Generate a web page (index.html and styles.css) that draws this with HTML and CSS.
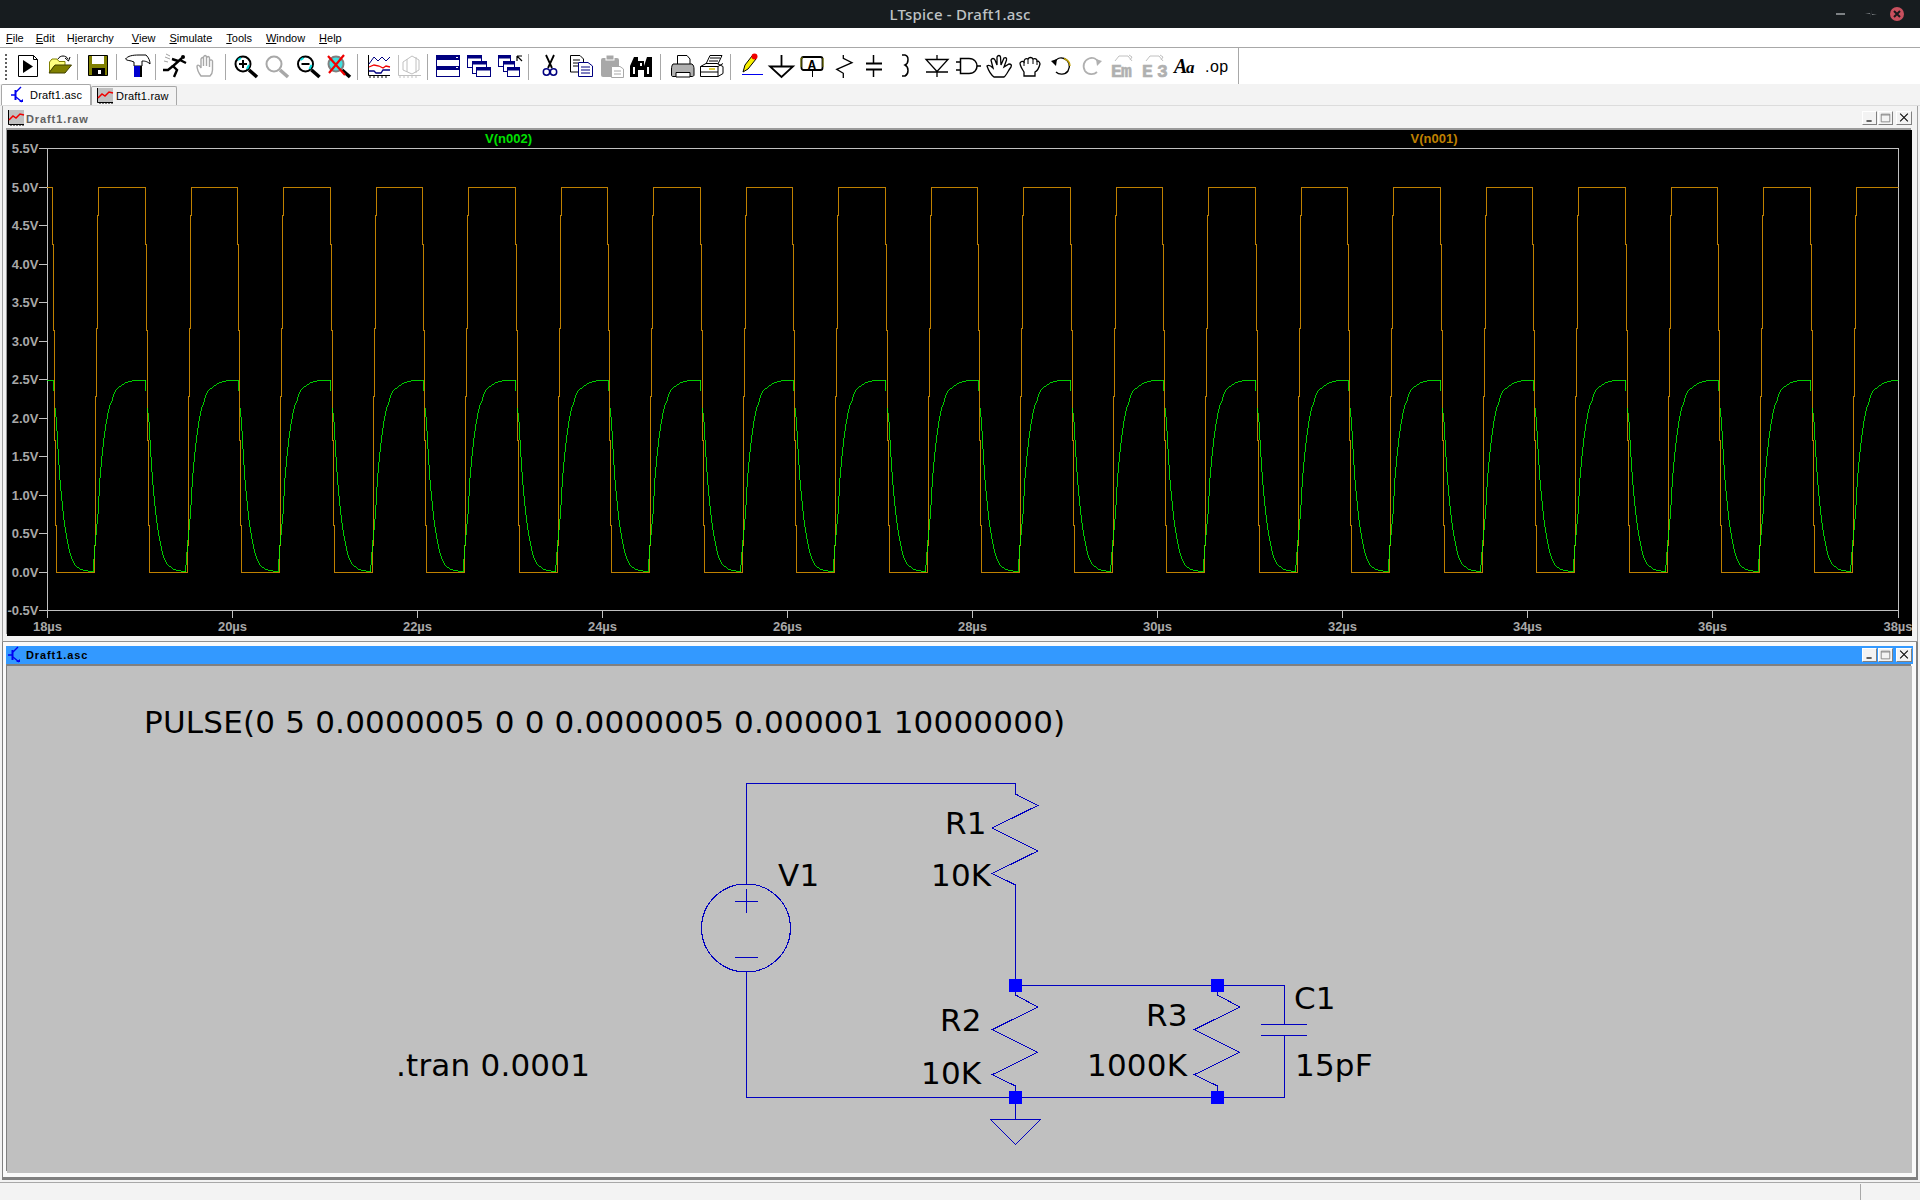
FILE: index.html
```html
<!DOCTYPE html>
<html lang="en">
<head>
<meta charset="utf-8">
<title>LTspice - Draft1.asc</title>
<link rel="stylesheet" href="styles.css">
</head>
<body>
<div class="app">
  <header class="titlebar">
    <span></span>
    <span class="title-text">LTspice - Draft1.asc</span>
    <div class="wm-controls">
      <span class="wm-min"></span>
      <svg class="wm-restore" viewBox="0 0 14 14"><path d="M7 2L8 7H13L8 8L7 2ZM7 12L6 7H1L6 6Z" fill="#7d8184"/></svg>
      <svg class="wm-close" viewBox="0 0 16 16"><circle cx="8" cy="8" r="7" fill="#c8505e"/><path d="M5 5L11 11M11 5L5 11" stroke="#17191c" stroke-width="2"/></svg>
    </div>
  </header>
  <nav class="menubar">
    <span class="menu"><u>F</u>ile</span>
    <span class="menu menu-tight"><u>E</u>dit</span>
    <span class="menu menu-tight">H<u>i</u>erarchy</span>
    <span class="menu menu-wide"><u>V</u>iew</span>
    <span class="menu"><u>S</u>imulate</span>
    <span class="menu"><u>T</u>ools</span>
    <span class="menu"><u>W</u>indow</span>
    <span class="menu"><u>H</u>elp</span>
  </nav>
  <div class="toolbar">
    <span class="grip"></span>
    <svg class="ic" viewBox="0 0 31 36"><path d="M7.500 7.500H22.500L26.500 11.500V28.500H7.500Z" fill="#fff" stroke="#000"/><path d="M22.500 7.500V11.500H26.500" fill="none" stroke="#000"/><path d="M12 12L22 18.500L12 25Z" fill="#000"/></svg>
    <svg class="ic" viewBox="0 0 31 36"><path d="M7.500 24V14L10 11H15L17 13.500H23V18H12L7.500 24Z" fill="#ffff80" stroke="#808000"/><path d="M7 25L13 17H29.500L23 25Z" fill="#808000" stroke="#404000"/><path d="M16 11C18 7 24 7 26 11" fill="none" stroke="#000"/><path d="M23 10L26.500 13L28 9" fill="none" stroke="#000"/></svg>
    <span class="sep"></span>
    <svg class="ic" viewBox="0 0 31 36"><path d="M7.500 7.500H26.500V27.500H7.500Z" fill="#808000" stroke="#000"/><rect x="11" y="8" width="12" height="8" fill="#fff"/><rect x="11" y="20" width="13" height="7" fill="#000"/><rect x="17" y="22" width="3" height="4" fill="#fff"/></svg>
    <span class="sep"></span>
    <svg class="ic" viewBox="0 0 31 36"><path d="M5.500 11C8 8 12 7 19 7H26C29 10 30 13 30 16C27 13 24 13 22 13V18H14V14C10 12 7 13 5.500 11Z" fill="#fff" stroke="#000"/><rect x="14" y="18" width="6" height="11" fill="#0000d0"/><rect x="20" y="18" width="2" height="11" fill="#000"/></svg>
    <span class="sep"></span>
    <svg class="ic" viewBox="0 0 31 36"><g fill="none" stroke="#000" stroke-width="2.400"><path d="M23 10L14 18L18 22L15 29"/><path d="M14 18L9 22H4"/><path d="M21 12L27 15M19 13L13 11"/></g><circle cx="24" cy="9" r="2" fill="#000"/><path d="M6 9L11 11M5 13L9 14M7 6L11 8" stroke="#a0a0a0" fill="none"/></svg>
    <svg class="ic" viewBox="0 0 31 36"><path d="M11 28C8 24 7 20 7 18C8 16 10 18 11 20V11C12 9 13 9 13.500 11V18V9C14.500 7 16 7 16.500 9V18V10C17.500 8 19 8 19.500 10V19V13C20.500 11 22 12 22.500 13V22C22.500 25 21 27 20 28Z" fill="#fff" stroke="#a8a8a8" stroke-width="1.400"/></svg>
    <span class="sep"></span>
    <svg class="ic" viewBox="0 0 31 36"><path d="M20 22L28 29" stroke="#000" stroke-width="3.600"/><circle cx="14" cy="16" r="7.500" fill="#fff" stroke="#000" stroke-width="2"/><path d="M9 12L12 10M18 21L20 17" stroke="#00e0e0" stroke-width="2"/><path d="M10 16H18M14 12V20" stroke="#000" stroke-width="2"/></svg>
    <svg class="ic" viewBox="0 0 31 36"><path d="M20 22L28 29" stroke="#a8a8a8" stroke-width="3.600"/><circle cx="14" cy="16" r="7.500" fill="#fff" stroke="#a8a8a8" stroke-width="2"/></svg>
    <svg class="ic" viewBox="0 0 31 36"><path d="M20.500 22L28.500 29" stroke="#000" stroke-width="3.600"/><circle cx="14.500" cy="16" r="7.500" fill="#fff" stroke="#000" stroke-width="2"/><path d="M9.500 12L12.500 10M18.500 21L20.500 17" stroke="#00e0e0" stroke-width="2"/><path d="M10.500 16H18.500" stroke="#000" stroke-width="2"/></svg>
    <svg class="ic" viewBox="0 0 31 36"><path d="M20 22L28 29" stroke="#000" stroke-width="3.600"/><circle cx="14" cy="16" r="7.500" fill="#40e0e0" stroke="#808080" stroke-width="2"/><path d="M6 8L23 27M22 7L7 25" stroke="#f00000" stroke-width="2.200"/></svg>
    <span class="sep"></span>
    <svg class="ic" viewBox="0 0 31 36"><path d="M7.500 7V27.500H29M9 27V30M13 27V30M17 27V30M21 27V30M25 27V30" fill="none" stroke="#000"/><path d="M8 16L13 9L17 13L21 9L25 13L29 9" fill="none" stroke="#000080"/><path d="M8 19L13 17L18 18L22 20L25 18L29 19" fill="none" stroke="#f00000" stroke-width="1.300"/><path d="M8 23H13L15 25H20L22 22H29" fill="none" stroke="#000080" stroke-width="1.300"/></svg>
    <svg class="ic" viewBox="0 0 31 36"><path d="M6.500 7V27.500H29M8 27V30M12 27V30M16 27V30M20 27V30M24 27V30M11 14L20 8L27 12V22L20 26L11 22Z M15 11V24M24 9V25" fill="none" stroke="#c0c0c0"/></svg>
    <span class="sep"></span>
    <svg class="ic" viewBox="0 0 31 36"><rect x="5.500" y="7.500" width="23" height="21" fill="#fff" stroke="#000080"/><rect x="6" y="8" width="22" height="4" fill="#000080"/><rect x="6" y="18" width="22" height="4" fill="#000080"/><path d="M25 9.500H27M25 19.500H27" stroke="#fff"/></svg>
    <svg class="ic" viewBox="0 0 31 36"><rect x="5.500" y="7.500" width="14" height="12" fill="#fff" stroke="#000080"/><rect x="5.500" y="7.500" width="14" height="3" fill="#000080"/><rect x="10.500" y="13.500" width="14" height="12" fill="#fff" stroke="#000080"/><rect x="10.500" y="13.500" width="14" height="3" fill="#000080"/><rect x="14.500" y="19.500" width="14" height="9" fill="#fff" stroke="#000080"/><rect x="14.500" y="19.500" width="14" height="3" fill="#000080"/></svg>
    <svg class="ic" viewBox="0 0 31 36"><rect x="5.500" y="7.500" width="12" height="11" fill="#fff" stroke="#000080"/><rect x="5.500" y="7.500" width="12" height="3" fill="#000080"/><rect x="10.500" y="13.500" width="11" height="10" fill="#fff" stroke="#000080"/><rect x="10.500" y="13.500" width="11" height="3" fill="#000080"/><rect x="14.500" y="19.500" width="12" height="9" fill="#fff" stroke="#000080"/><rect x="14.500" y="19.500" width="12" height="3" fill="#000080"/><path d="M24 8V13M24 8H29M24 8L29 13" fill="none" stroke="#000" stroke-width="1.200"/></svg>
    <span class="sep"></span>
    <svg class="ic" viewBox="0 0 31 36"><path d="M14 7L20 20M22 7L16 20" stroke="#000" stroke-width="1.800"/><circle cx="14.500" cy="24" r="3.200" fill="#fff" stroke="#000080" stroke-width="1.500"/><circle cx="21.500" cy="24" r="3.200" fill="#fff" stroke="#000080" stroke-width="1.500"/></svg>
    <svg class="ic" viewBox="0 0 31 36"><path d="M7.500 7.500H17L20.500 11V24H7.500Z" fill="#fff" stroke="#000"/><path d="M10 12H17M10 15H15M10 18H15" stroke="#000"/><path d="M15.500 14.500H25L29.500 18V28.500H15.500Z" fill="#fff" stroke="#000080"/><path d="M18 19H27M18 22H27M18 25H27" stroke="#000080"/></svg>
    <svg class="ic" viewBox="0 0 31 36"><rect x="7" y="10" width="18" height="19" rx="2" fill="#a8a8a8"/><rect x="12" y="7" width="8" height="5" fill="#a8a8a8" stroke="#fff"/><path d="M17.500 18.500H26L29.500 21V29.500H17.500Z" fill="#fff" stroke="#a8a8a8"/><path d="M20 23H27M20 26H27" stroke="#a8a8a8"/></svg>
    <svg class="ic" viewBox="0 0 31 36"><path d="M5 29V18L9 9H13V29ZM19 29V18L22 9H27V29Z" fill="#000"/><rect x="13" y="13" width="6" height="9" fill="#000"/><rect x="8" y="19" width="2" height="7" fill="#fff"/><rect x="22" y="19" width="2" height="7" fill="#fff"/><rect x="15" y="15" width="2" height="3" fill="#fff"/></svg>
    <span class="sep"></span>
    <svg class="ic" viewBox="0 0 31 36"><path d="M13.500 16V7.500H23L26 11V16" fill="#fff" stroke="#000"/><path d="M9 16H28C29.500 17 30 19 30 21V27C30 28 29 28.500 28 28.500H9C8 28.500 7.500 28 7.500 27V21C7.500 19 8 17 9 16Z" fill="#b0b0b0" stroke="#000"/><path d="M12 24.500H26V29H12Z" fill="#fff" stroke="#000"/></svg>
    <svg class="ic" viewBox="0 0 31 36"><path d="M11 16L15 7.500H27L23 16Z" fill="#fff" stroke="#000"/><path d="M15 10H25M14 13H23" stroke="#000"/><path d="M5.500 18.500L11 15.500H22L28 18.500V25.500L23 28.500H5.500Z" fill="#fff" stroke="#000"/><path d="M5.500 18.500H23V28.500M23 18.500L28 15.500M5.500 24H23" fill="none" stroke="#000"/><rect x="14" y="20" width="6" height="2" fill="#e0d040"/></svg>
    <span class="sep"></span>
    <svg class="ic" viewBox="0 0 31 36"><path d="M9 24L11 17L18 8L22 11L14 21Z" fill="#f8f000" stroke="#000"/><circle cx="20.500" cy="8.500" r="3" fill="#f00000"/><rect x="8" y="26" width="21" height="1" fill="#0000f0"/></svg>
    <svg class="ic" viewBox="0 0 31 36"><path d="M16.500 7V18M5 18.500H28L16.500 29Z" fill="none" stroke="#000" stroke-width="1.800"/></svg>
    <svg class="ic" viewBox="0 0 31 36"><rect x="5.500" y="9" width="21" height="13" rx="2" fill="#fff" stroke="#000" stroke-width="1.800"/><path d="M5 19V10H7M27 19V10" stroke="#808000" fill="none"/><text class="ic-a" x="16" y="20.500">A</text><path d="M16.500 22V29" stroke="#000"/></svg>
    <svg class="ic" viewBox="0 0 31 36"><path d="M16.300 7V10.300L25 14.700L9.700 21.300L16.300 25.300V30" fill="none" stroke="#000" stroke-width="1.300"/></svg>
    <svg class="ic" viewBox="0 0 31 36"><path d="M15.500 7V15M15.500 22V29" stroke="#000" stroke-width="1.500"/><path d="M8 15.500H24M8 21.500H24" stroke="#000" stroke-width="2.200"/></svg>
    <svg class="ic" viewBox="0 0 31 36"><path d="M13 7H16C20 8 20 15 16 17C20 19 20 26 16 28H13" fill="none" stroke="#000" stroke-width="1.500"/></svg>
    <svg class="ic" viewBox="0 0 31 36"><path d="M17 7V11M6 11.500H28L17 23.500ZM6 24H28M17 24V29" fill="none" stroke="#000" stroke-width="1.300"/></svg>
    <svg class="ic" viewBox="0 0 31 36"><path d="M9.500 10.500H18C24 10.500 26 15 26 18C26 21 24 25.500 18 25.500H9.500Z" fill="#fff" stroke="#000" stroke-width="1.500"/><path d="M5 14H9M5 22H9M26 18H30" stroke="#000" stroke-width="1.500"/></svg>
    <svg class="ic" viewBox="0 0 31 36"><path d="M12 29C8 26 6 21 5 18C7 16 9 18 11 20L9 12C10 10 12 10 13 12L15 17V9C16 7 18 7 18.500 9L19 17L22 10C23.500 9 25 10 24.500 12L22 19L27 16C29 16 30 17 29 19C26 23 24 28 22 29Z" fill="#fff" stroke="#000" stroke-width="1.300"/></svg>
    <svg class="ic" viewBox="0 0 31 36"><path d="M11 28V24C9 21 7 18 7 15C8 13 10 13 11 14C11 11 13 10 15 11C16 9 19 9 20 11C22 10 24 11 24 13C26 13 27 15 27 16C26 20 24 23 22 24V28Z" fill="#fff" stroke="#000" stroke-width="1.300"/><path d="M11 14V18M15 11V16M20 11V16M24 13V17" stroke="#000"/></svg>
    <svg class="ic" viewBox="0 0 31 36"><path d="M10 15C12 11 16 9 20 10.500C25 12.500 27 18 24 23C21 27 15 27 12 24" fill="none" stroke="#000" stroke-width="1.400"/><path d="M20 10.500C24 12 26 15 26 18" fill="none" stroke="#c0a000" stroke-width="1.400"/><path d="M7 13L13 11L12 18Z" fill="#000"/></svg>
    <svg class="ic" viewBox="0 0 31 36"><path d="M24 15C22 11 18 9 14 10.500C9 12.500 7 18 10 23C13 27 19 27 22 24" fill="none" stroke="#b0b0b0" stroke-width="1.800"/><path d="M27 13L21 11L22 18Z" fill="#b0b0b0"/></svg>
    <svg class="ic" viewBox="0 0 31 36"><text class="ic-gray" x="5" y="29">E</text><text class="ic-gray" x="15" y="29">m</text><path d="M9 13L13 8H22L26 13M23 7L26 9L24 12" fill="none" stroke="#c0c0c0"/></svg>
    <svg class="ic" viewBox="0 0 31 36"><text class="ic-gray" x="5" y="29">E</text><text class="ic-gray" x="20" y="29">3</text><path d="M9 13L13 8H22L26 13M23 7L26 9L24 12" fill="none" stroke="#c0c0c0"/></svg>
    <svg class="ic" viewBox="0 0 31 36"><text class="ic-aa" x="6" y="25">A</text><text class="ic-aa2" x="18" y="25">a</text></svg>
    <svg class="ic" viewBox="0 0 31 36"><text class="ic-op" x="6" y="24">.op</text></svg>
    <span class="sep sep-end"></span>
  </div>
  <div class="tabs">
    <div class="tab tab-active">
      <svg class="tab-icon" viewBox="0 0 18 18"><path d="M1 9H5" stroke="#0000f0" stroke-width="1.500"/><path d="M5.500 4V14" stroke="#0000f0" stroke-width="2"/><path d="M6 6L11 1M6 11L12 16" stroke="#0000f0" stroke-width="1.400"/><path d="M9 16H13V13Z" fill="#0000f0"/></svg>
      <span>Draft1.asc</span>
    </div>
    <div class="tab">
      <svg class="tab-icon" viewBox="0 0 18 18"><rect x="1" y="1" width="16" height="15" fill="#c0c0c0"/><path d="M1.500 1V15.500H17M4 15V17M7 15V17M10 15V17M13 15V17M16 15V17" fill="none" stroke="#000"/><path d="M2 11L6 7L9 9L13 5L17 6" fill="none" stroke="#f00000" stroke-width="1.500"/></svg>
      <span>Draft1.raw</span>
    </div>
  </div>
  <main class="workspace">
    <section class="win win-plot">
      <div class="win-title">
        <svg class="win-icon" viewBox="0 0 18 18"><rect x="1" y="1" width="16" height="15" fill="#c0c0c0"/><path d="M1.500 1V15.500H17M4 15V17M7 15V17M10 15V17M13 15V17M16 15V17" fill="none" stroke="#000"/><path d="M2 11L6 7L9 9L13 5L17 6" fill="none" stroke="#f00000" stroke-width="1.500"/></svg>
        <span class="win-name win-name-dim">Draft1.raw</span>
        <div class="win-btns">
          <span class="wbtn"><svg viewBox="0 0 15 14"><path d="M4 10.500H10" stroke="#000" stroke-width="1.400"/></svg></span>
          <span class="wbtn wbtn-max"><svg viewBox="0 0 15 14"><path d="M2.500 2.500H12.500V11.500H2.500Z" fill="none" stroke="#808080"/><path d="M2.500 3.500H12.500" stroke="#808080"/></svg></span>
          <span class="wbtn wbtn-close"><svg viewBox="0 0 15 14"><path d="M3 2L12 11M12 2L3 11" stroke="#000" stroke-width="1.200"/></svg></span>
        </div>
      </div>
      <svg class="plot" viewBox="7 130 1905 506">
        <defs>
          <clipPath id="plotclip-full"><rect x="47" y="148" width="1851.500" height="463"/></clipPath>
          <g id="cycle">
            <path class="tr-orange" d="M52.500 187V244H53.500V330H54.500V440H55.500V525H56.500V572H94.500V545H95.500V396H96.500V328H97.500V215H98.500V187H145"/>
            <path class="tr-green" d="M52 380H53V391M55 408L56.600 423L58 449L60 480L62 501L64 520L66 533L68 544L70 553L72 559L74 563L76 566L80 569L84 570.500L88 571L93 572L95 545L98 514L100 478L102 456L104 438L106 424L108 413L110 405L112 399.500L114 394L116 390L118 388L122 385L126 382.500L132 381L144.500 380"/>
          </g>
        </defs>
        <path class="axis" d="M47.500 148.500H1898.500V610.500H47.500Z"/>
        <path class="axis" d="M39 148.500H47M39 187.500H47M39 225.500H47M39 264.500H47M39 302.500H47M39 341.500H47M39 379.500H47M39 418.500H47M39 456.500H47M39 495.500H47M39 533.500H47M39 572.500H47M39 610.500H47"/>
        <path class="axis" d="M232.500 610V618M417.500 610V618M602.500 610V618M787.500 610V618M972.500 610V618M1157.500 610V618M1342.500 610V618M1527.500 610V618M1712.500 610V618M47.500 610V618M1898.500 610V618"/>
        <g clip-path="url(#plotclip-full)">
          <use href="#cycle" x="-92.500"/><use href="#cycle" x="0"/><use href="#cycle" x="92.500"/><use href="#cycle" x="185"/><use href="#cycle" x="277.500"/><use href="#cycle" x="370"/><use href="#cycle" x="462.500"/><use href="#cycle" x="555"/><use href="#cycle" x="647.500"/><use href="#cycle" x="740"/><use href="#cycle" x="832.500"/><use href="#cycle" x="925"/><use href="#cycle" x="1017.500"/><use href="#cycle" x="1110"/><use href="#cycle" x="1202.500"/><use href="#cycle" x="1295"/><use href="#cycle" x="1387.500"/><use href="#cycle" x="1480"/><use href="#cycle" x="1572.500"/><use href="#cycle" x="1665"/><use href="#cycle" x="1757.500"/><use href="#cycle" x="1850"/>
        </g>
        <text class="ylab" x="38.500" y="153">5.5V</text>
        <text class="ylab" x="38.500" y="192">5.0V</text>
        <text class="ylab" x="38.500" y="230">4.5V</text>
        <text class="ylab" x="38.500" y="269">4.0V</text>
        <text class="ylab" x="38.500" y="307">3.5V</text>
        <text class="ylab" x="38.500" y="346">3.0V</text>
        <text class="ylab" x="38.500" y="384">2.5V</text>
        <text class="ylab" x="38.500" y="423">2.0V</text>
        <text class="ylab" x="38.500" y="461">1.5V</text>
        <text class="ylab" x="38.500" y="500">1.0V</text>
        <text class="ylab" x="38.500" y="538">0.5V</text>
        <text class="ylab" x="38.500" y="577">0.0V</text>
        <text class="ylab" x="38.500" y="615">-0.5V</text>
        <text class="xlab" x="47.500" y="631">18µs</text>
        <text class="xlab" x="232.500" y="631">20µs</text>
        <text class="xlab" x="417.500" y="631">22µs</text>
        <text class="xlab" x="602.500" y="631">24µs</text>
        <text class="xlab" x="787.500" y="631">26µs</text>
        <text class="xlab" x="972.500" y="631">28µs</text>
        <text class="xlab" x="1157.500" y="631">30µs</text>
        <text class="xlab" x="1342.500" y="631">32µs</text>
        <text class="xlab" x="1527.500" y="631">34µs</text>
        <text class="xlab" x="1712.500" y="631">36µs</text>
        <text class="xlab" x="1898" y="631">38µs</text>
        <text class="trace-name tn-green" x="508.500" y="143">V(n002)</text>
        <text class="trace-name tn-orange" x="1434" y="143">V(n001)</text>
      </svg>
    </section>
    <section class="win win-sch">
      <div class="win-title win-title-active">
        <svg class="win-icon" viewBox="0 0 18 18"><path d="M1 9H5" stroke="#0000f0" stroke-width="1.500"/><path d="M5.500 4V14" stroke="#0000f0" stroke-width="2"/><path d="M6 6L11 1M6 11L12 16" stroke="#0000f0" stroke-width="1.400"/><path d="M9 16H13V13Z" fill="#0000f0"/></svg>
        <span class="win-name">Draft1.asc</span>
        <div class="win-btns">
          <span class="wbtn"><svg viewBox="0 0 15 14"><path d="M4 10.500H10" stroke="#000" stroke-width="1.400"/></svg></span>
          <span class="wbtn wbtn-max"><svg viewBox="0 0 15 14"><path d="M2.500 2.500H12.500V11.500H2.500Z" fill="none" stroke="#808080"/><path d="M2.500 3.500H12.500" stroke="#808080"/></svg></span>
          <span class="wbtn wbtn-close"><svg viewBox="0 0 15 14"><path d="M3 2L12 11M12 2L3 11" stroke="#000" stroke-width="1.200"/></svg></span>
        </div>
      </div>
      <svg class="sch" viewBox="7 666 1905 507">
        <path class="wire" d="M746.500 884V783.500H1015.500V794"/>
        <path class="wire" d="M1015.500 794L1037.700 805.500L992.200 828L1037.700 851L992.200 873.500L1015.500 885V985.500"/>
        <path class="wire" d="M1015.500 985.500H1284.500V1024M1284.500 1035V1097.500H746.500V972"/>
        <path class="wire" d="M1015.500 985.500V995L1037.700 1007L992.200 1029.700L1037.700 1052.300L992.200 1074.700L1015.500 1086V1119"/>
        <path class="wire" d="M1217.500 985.500V995L1239.700 1007L1194.200 1029.700L1239.700 1052.300L1194.200 1074.700L1217.500 1086V1097"/>
        <path class="wire" d="M1261 1024.500H1307M1261 1035.500H1307"/>
        <path class="wire" d="M990.500 1119.500H1040.500L1015.500 1144.500Z"/>
        <ellipse class="wire" cx="746" cy="928" rx="44.500" ry="44"/>
        <path class="wire" d="M735 901.500H758M746.500 889V913M735 957.500H758"/>
        <rect class="node" x="1009" y="979" width="13" height="13"/>
        <rect class="node" x="1211" y="979" width="13" height="13"/>
        <rect class="node" x="1009" y="1091" width="13" height="13"/>
        <rect class="node" x="1211" y="1091" width="13" height="13"/>
        <text class="sch-text" x="144" y="733">PULSE(0 5 0.0000005 0 0 0.0000005 0.000001 10000000)</text>
        <text class="sch-text" x="396" y="1076">.tran 0.0001</text>
        <text class="sch-text" x="945" y="834">R1</text>
        <text class="sch-text" x="931" y="886">10K</text>
        <text class="sch-text" x="778" y="886">V1</text>
        <text class="sch-text" x="940" y="1031">R2</text>
        <text class="sch-text" x="921" y="1084">10K</text>
        <text class="sch-text" x="1146" y="1026">R3</text>
        <text class="sch-text" x="1087" y="1076">1000K</text>
        <text class="sch-text" x="1294" y="1009">C1</text>
        <text class="sch-text" x="1295" y="1076">15pF</text>
      </svg>
    </section>
  </main>
  <footer class="statusbar"><span class="status-cell"></span></footer>
</div>
</body>
</html>
```
FILE: styles.css
```css
* { box-sizing: border-box; }
html, body { margin: 0; padding: 0; }
body { width: 1920px; height: 1200px; overflow: hidden; background: #f3f3f3; font-family: "Liberation Sans", Arial, sans-serif; }
.app { display: flex; flex-direction: column; width: 1920px; height: 1200px; }

.titlebar { height: 28px; flex: none; background: #171c1f; display: grid; grid-template-columns: 1fr auto 1fr; align-items: center; }
.title-text { font-family: "Noto Sans", sans-serif; font-size: 15px; font-weight: 500; letter-spacing: 0.2px; color: #bfc3c5; }
.wm-controls { display: flex; justify-content: flex-end; align-items: center; padding-right: 15px; }
.wm-min { width: 9px; height: 2px; background: #7d8184; margin-right: 19px; }
.wm-restore { width: 14px; height: 14px; margin-right: 11px; display: block; }
.wm-close { width: 16px; height: 16px; display: block; }

.menubar { height: 20px; flex: none; background: #fff; border-bottom: 1px solid #a8a8a8; display: flex; align-items: center; padding-left: 6px; gap: 14px; font-size: 11px; color: #000; }
.menu { line-height: 18px; }
.menu-tight { margin-left: -2px; }
.menu-wide { margin-left: 4px; }

.toolbar { height: 36px; flex: none; background: #fff; display: flex; padding-left: 5px; }
.grip { width: 2px; margin: 6px 4px 4px 0; border-left: 2px dotted #606060; }
.ic { width: 31px; height: 36px; flex: none; display: block; }
.sep { width: 1px; margin: 6px 3px 4px 4px; background: #a8a8a8; flex: none; }
.sep-end { margin: 0 0 0 8px; }
.ic-a { font: bold 13px "Liberation Mono", monospace; fill: #000; text-anchor: middle; }
.ic-gray { font: bold 18px "Liberation Mono", monospace; fill: #b0b0b0; stroke: #b0b0b0; stroke-width: 0.6px; }
.ic-aa { font: italic bold 20px "Liberation Serif", serif; fill: #000; }
.ic-aa2 { font: italic bold 17px "Liberation Serif", serif; fill: #000; }
.ic-op { font: 16px "Liberation Sans", sans-serif; fill: #000; letter-spacing: 0.5px; }

.tabs { height: 21px; flex: none; background: #f3f3f3; display: flex; align-items: flex-end; padding-left: 1px; font-size: 11px; color: #000; }
.tab { height: 19px; width: 86px; display: flex; align-items: center; gap: 2px; padding-left: 4px; background: #f3f3f3; border: 1px solid #a8a8a8; border-bottom: 0; border-radius: 2px 2px 0 0; }
.tab span { letter-spacing: 0.2px; }
.tab-active { height: 21px; width: 90px; background: #fff; padding-left: 8px; gap: 2px; }
.tab-icon { width: 18px; height: 18px; display: block; flex: none; }

.workspace { height: 1077px; flex: none; display: flex; flex-direction: column; padding: 0 2px; border-top: 1px solid #dcdcdc; background: #f3f3f3; }
.win { background: #f3f3f3; border: 1px solid #a0a0a0; border-top: 0; padding: 2px 5px 0 4px; display: flex; flex-direction: column; }
.win-plot { height: 536px; border-bottom-color: #909090; padding-bottom: 4px; }
.win-sch { height: 538px; padding-top: 4px; border-width: 0 2px 3px 1px; border-color: #808080; background: #fafafa; padding-right: 3px; }
.win-title { height: 20px; flex: none; display: flex; align-items: center; margin-left: -1px; }
.win-title-active { height: 18px; background: #3399ff; padding-right: 1px; }
.win-icon { width: 18px; height: 18px; display: block; flex: none; margin: 0 0 0 1px; }
.win-name { font-size: 11px; font-weight: bold; letter-spacing: 0.9px; margin-left: 1px; color: #000; }
.win-name-dim { color: #606060; margin-top: 2px; }
.win-btns { display: flex; margin-left: auto; gap: 1px; }
.wbtn { width: 15px; height: 14px; background: #f3f3f3; border: 1px solid; border-color: #fff #808080 #808080 #fff; display: block; }
.wbtn svg { display: block; width: 100%; height: 100%; }
.wbtn-close { margin-left: 2px; width: 16px; }

.plot { width: 1905px; height: 506px; display: block; flex: none; background: #000; margin-top: 2px; box-shadow: -1px -2px 0 #9a9a9a; }
.sch { width: 1905px; height: 507px; display: block; flex: none; background: #c0c0c0; margin-top: 2px; box-shadow: -1px -2px 0 #808080; }

.axis { fill: none; stroke: #c0c0c0; stroke-width: 1; shape-rendering: crispEdges; }
.tr-orange { fill: none; stroke: #bf8000; stroke-width: 1; shape-rendering: crispEdges; }
.tr-green { fill: none; stroke: #00ff00; stroke-width: 0.8; shape-rendering: crispEdges; }
.ylab { font: bold 13px "Liberation Sans", sans-serif; fill: #a8a8a8; text-anchor: end; }
.xlab { font: bold 13px "Liberation Sans", sans-serif; fill: #a8a8a8; text-anchor: middle; }
.trace-name { font: bold 13px "Liberation Sans", sans-serif; text-anchor: middle; }
.tn-green { fill: #00e000; }
.tn-orange { fill: #bf8000; }

.wire { fill: none; stroke: #0000c0; stroke-width: 1; shape-rendering: crispEdges; }
.node { fill: #0000ff; }
.sch-text { font: 31px "DejaVu Sans", sans-serif; letter-spacing: 0.2px; fill: #000; }

.statusbar { flex: 1; background: #f3f3f3; border-top: 1px solid #a8a8a8; display: flex; justify-content: flex-end; padding: 1px 0 0; }
.status-cell { width: 60px; border-left: 1px solid #a8a8a8; }
```
